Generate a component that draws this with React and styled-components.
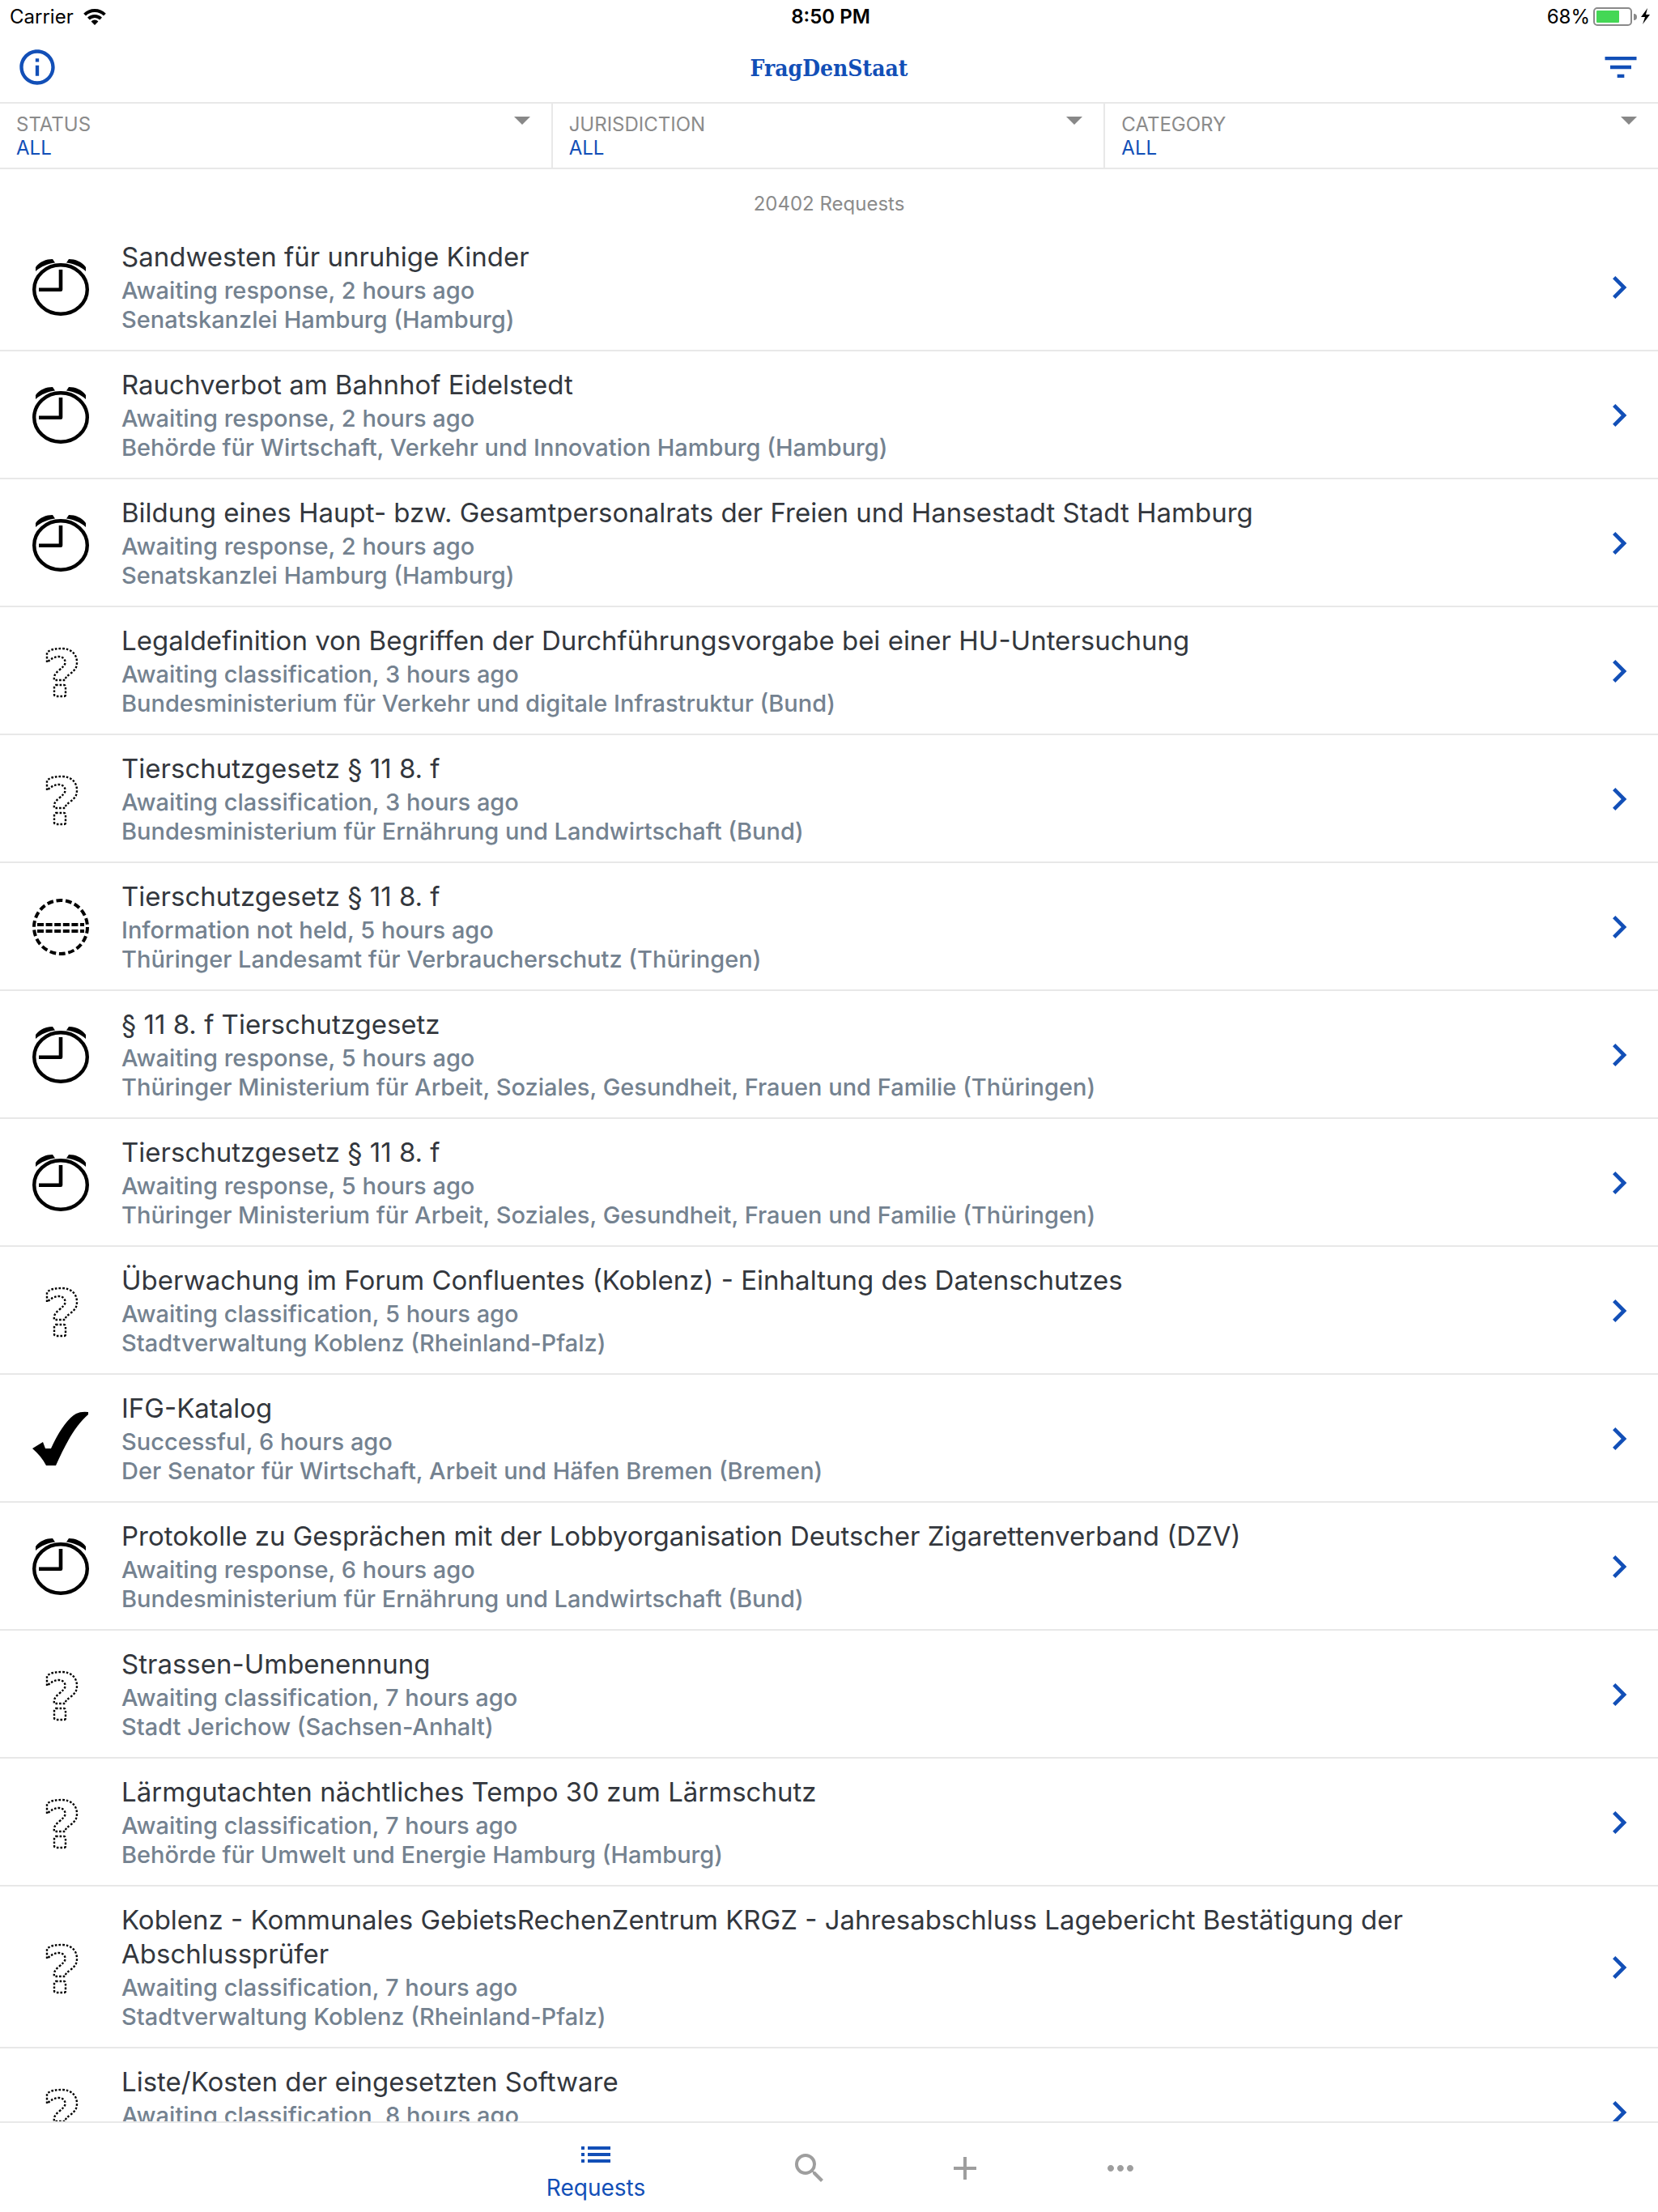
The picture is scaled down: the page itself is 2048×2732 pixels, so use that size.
import React from "react";
import styled, { createGlobalStyle } from "styled-components";
import {
  MdInfoOutline,
  MdFilterList,
  MdChevronRight,
  MdList,
  MdSearch,
  MdAdd,
  MdMoreHoriz,
} from "react-icons/md";

const blue = "#124fb7";
const line = "#e8e8e8";
const grey = "#8b8b8b";

const GlobalStyle = createGlobalStyle`
  * { box-sizing: border-box; }
  body {
    margin: 0;
    background: #fff;
    font-family: Inter, "Liberation Sans", sans-serif;
  }
  button {
    margin: 0;
    padding: 0;
    border: 0;
    background: none;
    font: inherit;
    cursor: pointer;
  }
`;

const Screen = styled.div`
  display: flex;
  flex-direction: column;
  height: 100vh;
  overflow: hidden;
`;

const StatusBar = styled.div`
  display: grid;
  grid-template-columns: 1fr auto 1fr;
  align-items: center;
  height: 40px;
  padding: 2px 8px 0 12px;
  font-size: 24px;
  line-height: 38px;
  color: #000;
`;

const StatusGroup = styled.div`
  display: flex;
  align-items: center;
  justify-content: ${(p) => (p.$end ? "flex-end" : "flex-start")};
  gap: ${(p) => (p.$end ? 4 : 12)}px;
`;

const Clock = styled.span`
  font-weight: 600;
`;

const Header = styled.header`
  display: flex;
  align-items: center;
  justify-content: space-between;
  height: 88px;
  padding: 0 20px;
  border-bottom: 2px solid ${line};
`;

const IconButton = styled.button`
  display: flex;
  color: ${blue};
`;

const Brand = styled.h1`
  margin: 0;
  padding-top: 4px;
  font-family: "DejaVu Serif Condensed", "DejaVu Serif", serif;
  font-size: 28px;
  line-height: 40px;
  font-weight: 700;
  color: ${blue};
`;

const Filters = styled.div`
  display: grid;
  grid-template-columns: repeat(3, 1fr);
  border-bottom: 2px solid ${line};
`;

const Filter = styled.button`
  display: flex;
  align-items: flex-start;
  justify-content: space-between;
  height: 79px;
  padding: 11px 26px 10px 20px;
  border-right: 2px solid ${line};
  font-size: 24px;
  line-height: 29px;
  text-align: left;

  &:last-child { border-right: 0; }
`;

const FilterLabel = styled.span`
  display: block;
  color: ${grey};
`;

const FilterValue = styled.span`
  display: block;
  color: ${blue};
`;

const Caret = styled.span`
  margin-top: 5px;
  border: 10px solid transparent;
  border-top-color: #888;
  border-bottom: 0;
`;

const Scroller = styled.main`
  flex: 1;
  min-height: 0;
  overflow: hidden;
`;

const Count = styled.p`
  margin: 0;
  padding: 25px 0 6px;
  font-size: 24px;
  line-height: 36px;
  text-align: center;
  color: ${grey};
`;

const List = styled.ul`
  margin: 0;
  padding: 0;
  list-style: none;
`;

const Row = styled.li`
  border-bottom: 2px solid ${line};
`;

const RowButton = styled.button`
  display: flex;
  align-items: center;
  gap: 40px;
  width: 100%;
  padding: 20px 20px 19px 40px;
  text-align: left;
  color: ${blue};
`;

const RowText = styled.span`
  flex: 1;
  display: flex;
  flex-direction: column;
  padding-right: 180px;
`;

const RowTitle = styled.span`
  margin-bottom: 3px;
  font-size: 33px;
  line-height: 42px;
  color: #33373d;
`;

const RowMeta = styled.span`
  min-height: 36px;
  font-size: 29px;
  line-height: 36px;
  font-weight: 500;
  color: #748290;
`;

const TabBar = styled.nav`
  display: flex;
  justify-content: center;
  height: 112px;
  border-top: 2px solid ${line};
`;

const Tab = styled.button`
  display: flex;
  flex-direction: column;
  align-items: center;
  justify-content: center;
  width: ${(p) => (p.$active ? 336 : 192)}px;
  padding-top: 1px;
  font-size: 28px;
  line-height: 34px;
  color: ${(p) => (p.$active ? blue : "#9e9e9e")};
`;

const Glyph = styled.svg`
  flex: none;
  display: block;
`;

const WifiIcon = () => (
  <Glyph width="28" height="22" viewBox="0 0 28 22" fill="none" stroke="#000" strokeWidth="4">
    <path d="M1.6 8.2a17.6 17.6 0 0 1 24.8 0" />
    <path d="M6.4 13.2a10.8 10.8 0 0 1 15.2 0" />
    <path d="M14 21l-4.4-4.6a6.2 6.2 0 0 1 8.8 0z" fill="#000" stroke="none" />
  </Glyph>
);

const BatteryIcon = () => (
  <Glyph width="72" height="24" viewBox="0 0 72 24">
    <rect x="1" y="1" width="46" height="21" rx="4" fill="none" stroke="#8a8a8a" strokeWidth="2" />
    <rect x="4" y="4" width="28" height="15" rx="1" fill="#44d755" />
    <path d="M50 8a4 4 0 0 1 0 8z" fill="#8a8a8a" />
    <path d="M67 1l-8 11h5l-3 9 9-12h-5z" fill="#000" />
  </Glyph>
);

const AlarmIcon = () => (
  <Glyph width="70" height="70" viewBox="0 0 70 70" fill="none" stroke="#000">
    <ellipse cx="35" cy="37.5" rx="32.8" ry="30.3" strokeWidth="4.4" />
    <path d="M35 13v24.8H8" strokeWidth="4.6" strokeLinejoin="round" />
    <path d="M4 15V10C9 3 17 0 25 0l3 4.5C19 5.500 11 9 4 15z" fill="#000" stroke="none" />
    <path d="M66 15V10C61 3 53 0 45 0l-3 4.500C51 5.500 59 9 66 15z" fill="#000" stroke="none" />
  </Glyph>
);

const QuestionIcon = () => (
  <Glyph width="70" height="70" viewBox="0 0 70 70" fill="none" stroke="#000" strokeWidth="2.400" strokeDasharray="2.6 2">
    <path d="M18 24V12C22 8 29 7 36 7c12 0 19 7 19 17 0 7-3 10-8 14-4 3-6 4-6.500 8H27c-1-6 2-9 6-12 4-4 7.500-6 7.500-10 0-4-3-7-7.500-7-6 0-10 3-15 7z" />
    <rect x="27" y="52" width="14" height="14" rx="2" />
  </Glyph>
);

const NotHeldIcon = () => (
  <Glyph width="70" height="70" viewBox="0 0 70 70" fill="none" stroke="#000" strokeWidth="4">
    <circle cx="35" cy="35" r="33" strokeDasharray="7.8 3.72" />
    <path d="M6 32h58M6 40h58" strokeDasharray="8 2.600" />
  </Glyph>
);

const CheckIcon = () => (
  <Glyph width="70" height="70" viewBox="0 0 70 70">
    <path d="M0 47l13-8 3 8h7C31 29 43 10 54 4q6-3 15-2v3C53 19 41 41 29 68H17C13 60 7 53 0 47z" />
  </Glyph>
);

const statusIcons = {
  response: AlarmIcon,
  classification: QuestionIcon,
  notHeld: NotHeldIcon,
  success: CheckIcon,
};

const filters = ["STATUS", "JURISDICTION", "CATEGORY"];

const requests = [
  ["response", "Sandwesten für unruhige Kinder", "Awaiting response, 2 hours ago", "Senatskanzlei Hamburg (Hamburg)"],
  ["response", "Rauchverbot am Bahnhof Eidelstedt", "Awaiting response, 2 hours ago", "Behörde für Wirtschaft, Verkehr und Innovation Hamburg (Hamburg)"],
  ["response", "Bildung eines Haupt- bzw. Gesamtpersonalrats der Freien und Hansestadt Stadt Hamburg", "Awaiting response, 2 hours ago", "Senatskanzlei Hamburg (Hamburg)"],
  ["classification", "Legaldefinition von Begriffen der Durchführungsvorgabe bei einer HU-Untersuchung", "Awaiting classification, 3 hours ago", "Bundesministerium für Verkehr und digitale Infrastruktur (Bund)"],
  ["classification", "Tierschutzgesetz § 11 8. f", "Awaiting classification, 3 hours ago", "Bundesministerium für Ernährung und Landwirtschaft (Bund)"],
  ["notHeld", "Tierschutzgesetz § 11 8. f", "Information not held, 5 hours ago", "Thüringer Landesamt für Verbraucherschutz (Thüringen)"],
  ["response", "§ 11 8. f Tierschutzgesetz", "Awaiting response, 5 hours ago", "Thüringer Ministerium für Arbeit, Soziales, Gesundheit, Frauen und Familie (Thüringen)"],
  ["response", "Tierschutzgesetz § 11 8. f", "Awaiting response, 5 hours ago", "Thüringer Ministerium für Arbeit, Soziales, Gesundheit, Frauen und Familie (Thüringen)"],
  ["classification", "Überwachung im Forum Confluentes (Koblenz) - Einhaltung des Datenschutzes", "Awaiting classification, 5 hours ago", "Stadtverwaltung Koblenz (Rheinland-Pfalz)"],
  ["success", "IFG-Katalog", "Successful, 6 hours ago", "Der Senator für Wirtschaft, Arbeit und Häfen Bremen (Bremen)"],
  ["response", "Protokolle zu Gesprächen mit der Lobbyorganisation Deutscher Zigarettenverband (DZV)", "Awaiting response, 6 hours ago", "Bundesministerium für Ernährung und Landwirtschaft (Bund)"],
  ["classification", "Strassen-Umbenennung", "Awaiting classification, 7 hours ago", "Stadt Jerichow (Sachsen-Anhalt)"],
  ["classification", "Lärmgutachten nächtliches Tempo 30 zum Lärmschutz", "Awaiting classification, 7 hours ago", "Behörde für Umwelt und Energie Hamburg (Hamburg)"],
  ["classification", "Koblenz - Kommunales GebietsRechenZentrum KRGZ - Jahresabschluss Lagebericht Bestätigung der Abschlussprüfer", "Awaiting classification, 7 hours ago", "Stadtverwaltung Koblenz (Rheinland-Pfalz)"],
  ["classification", "Liste/Kosten der eingesetzten Software", "Awaiting classification, 8 hours ago", ""],
];

function RequestRow({ status, title, state, authority }) {
  const StatusIcon = statusIcons[status];
  return (
    <Row>
      <RowButton>
        <StatusIcon />
        <RowText>
          <RowTitle>{title}</RowTitle>
          <RowMeta>{state}</RowMeta>
          <RowMeta>{authority}</RowMeta>
        </RowText>
        <MdChevronRight size={56} />
      </RowButton>
    </Row>
  );
}

export default function App() {
  return (
    <Screen>
      <GlobalStyle />
      <StatusBar>
        <StatusGroup>
          Carrier
          <WifiIcon />
        </StatusGroup>
        <Clock>8:50 PM</Clock>
        <StatusGroup $end>
          68%
          <BatteryIcon />
        </StatusGroup>
      </StatusBar>
      <Header>
        <IconButton aria-label="Info">
          <MdInfoOutline size={52} />
        </IconButton>
        <Brand>FragDenStaat</Brand>
        <IconButton aria-label="Filter">
          <MdFilterList size={52} />
        </IconButton>
      </Header>
      <Filters>
        {filters.map((name) => (
          <Filter key={name}>
            <span>
              <FilterLabel>{name}</FilterLabel>
              <FilterValue>ALL</FilterValue>
            </span>
            <Caret />
          </Filter>
        ))}
      </Filters>
      <Scroller>
        <Count>20402 Requests</Count>
        <List>
          {requests.map(([status, title, state, authority], i) => (
            <RequestRow key={i} status={status} title={title} state={state} authority={authority} />
          ))}
        </List>
      </Scroller>
      <TabBar>
        <Tab $active>
          <MdList size={48} />
          Requests
        </Tab>
        <Tab aria-label="Search">
          <MdSearch size={48} />
        </Tab>
        <Tab aria-label="New request">
          <MdAdd size={48} />
        </Tab>
        <Tab aria-label="More">
          <MdMoreHoriz size={48} />
        </Tab>
      </TabBar>
    </Screen>
  );
}
